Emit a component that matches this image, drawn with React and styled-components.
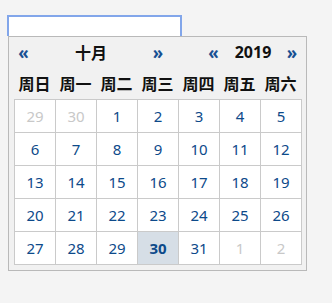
import React from 'react';
import styled, { createGlobalStyle } from 'styled-components';

const Global = createGlobalStyle`
  html, body {
    margin: 0;
    background: #f4f4f4;
    font-family: "Noto Sans", "Noto Sans CJK SC", sans-serif;
  }
`;

const Page = styled.div`
  padding: 15px 0 0 7px;
`;

const Input = styled.input`
  display: block;
  box-sizing: border-box;
  width: 175px;
  height: 21px;
  margin: 0;
  border: 2px solid #82a6ea;
  border-bottom: none;
  background: #fff;
  outline: none;
`;

const Panel = styled.div`
  box-sizing: border-box;
  width: 299px;
  margin-left: 1px;
  padding: 0 4px 5px 5px;
  border: 1px solid #b9b9b9;
  background: #f1f1f1;
`;

const Header = styled.div`
  display: grid;
  grid-template-columns: 19px 116px 18px 37px 19px 60px 18px;
  height: 30px;
  align-items: center;
  font-weight: bold;
`;

const Arrow = styled.span`
  grid-column: ${p => p.col};
  text-align: center;
  color: #174f92;
  font-size: 17px;
  cursor: pointer;
`;

const Title = styled.span`
  grid-column: ${p => p.col};
  text-align: center;
  color: #111;
  font-size: ${p => p.size}px;
`;

const Weekdays = styled.div`
  display: grid;
  grid-template-columns: repeat(7, 41px);
  height: 32px;
  align-items: center;
`;

const Weekday = styled.span`
  text-align: center;
  font-weight: bold;
  font-size: 16px;
  color: #111;
`;

const Days = styled.div`
  display: grid;
  grid-template-columns: repeat(7, 40px);
  grid-auto-rows: 32px;
  gap: 1px;
  padding: 1px;
  width: max-content;
  background: #cacaca;
`;

const Day = styled.div`
  display: flex;
  align-items: center;
  justify-content: center;
  font-size: 15px;
  background: ${p => (p.today ? '#d6dee6' : '#fff')};
  color: ${p => (p.muted ? '#c8c8c8' : '#0d4a8a')};
  font-weight: ${p => (p.today ? 'bold' : 'normal')};
`;

const weekdays = ['周日', '周一', '周二', '周三', '周四', '周五', '周六'];

const days = [
  ...[29, 30].map(d => ({ d, muted: true })),
  ...Array.from({ length: 31 }, (_, i) => ({ d: i + 1, today: i + 1 === 30 })),
  ...[1, 2].map(d => ({ d, muted: true })),
];

export default function App() {
  return (
    <Page>
      <Global />
      <Input type="text" />
      <Panel>
        <Header>
          <Arrow col={1}>«</Arrow>
          <Title col={2} size={16}>十月</Title>
          <Arrow col={3}>»</Arrow>
          <Arrow col={5}>«</Arrow>
          <Title col={6} size={16}>2019</Title>
          <Arrow col={7}>»</Arrow>
        </Header>
        <Weekdays>
          {weekdays.map(w => <Weekday key={w}>{w}</Weekday>)}
        </Weekdays>
        <Days>
          {days.map((x, i) => (
            <Day key={i} muted={x.muted} today={x.today}>{x.d}</Day>
          ))}
        </Days>
      </Panel>
    </Page>
  );
}
